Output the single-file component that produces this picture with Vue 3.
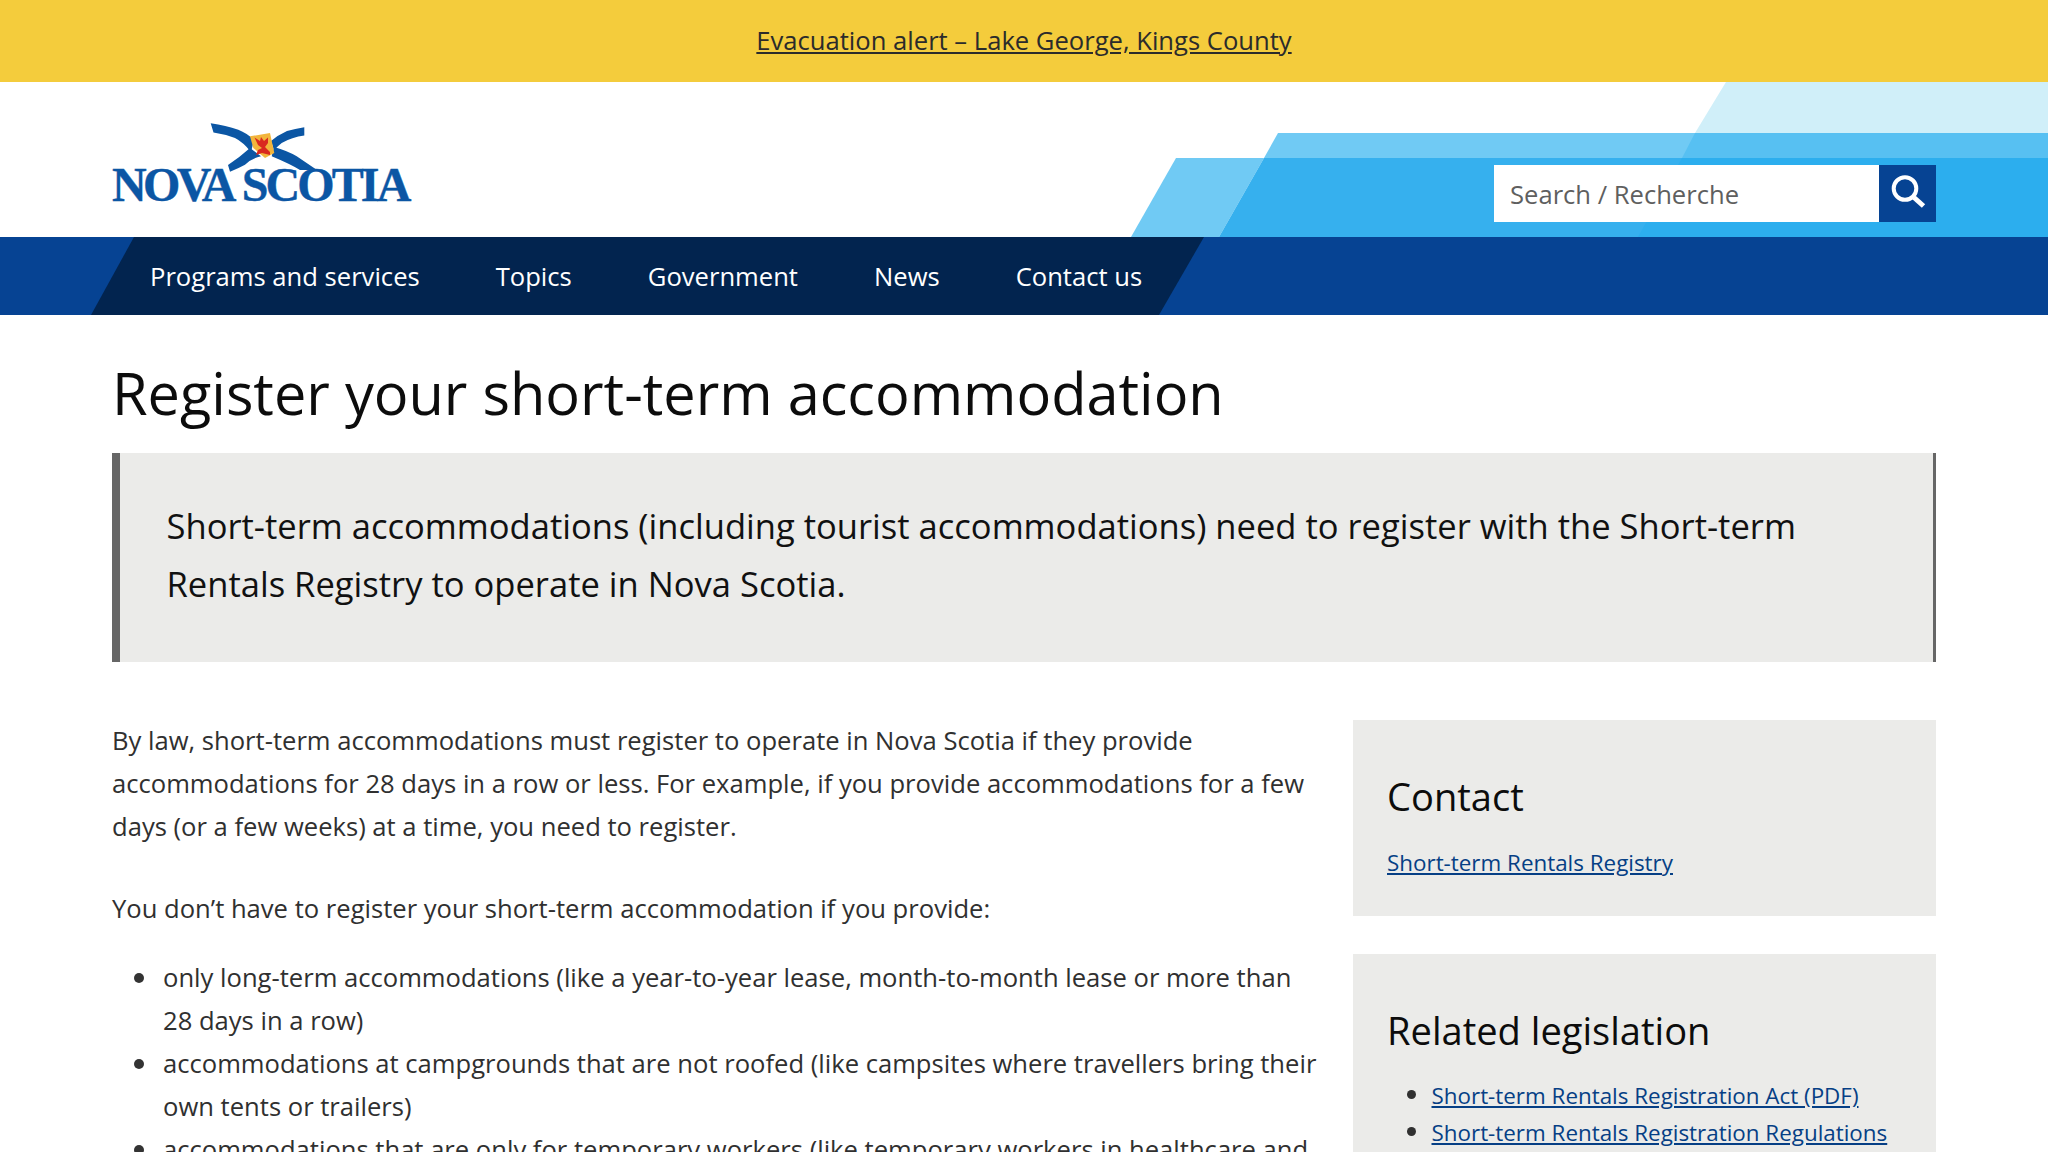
<script setup>
const navItems = ['Programs and services', 'Topics', 'Government', 'News', 'Contact us']
</script>

<template>
  <div class="page">
    <div class="alert"><a href="#">Evacuation alert – Lake George, Kings County</a></div>

    <header class="header">
      <svg class="swoosh" viewBox="0 0 2048 155" width="2048" height="155" aria-hidden="true">
        <polygon fill="#d0eff9" points="1726,0 2048,0 2048,51 1695,51" />
        <polygon fill="#70caf4" points="1278,51 2048,51 2048,76 1264,76" />
        <polygon fill="#57c0f2" points="1695,51 2048,51 2048,76 1682,76" />
        <polygon fill="#70caf4" points="1176,76 1264,76 1219,155 1131,155" />
        <polygon fill="#36b0ee" points="1264,76 2048,76 2048,155 1219,155" />
        <polygon fill="#2caeee" points="1682,76 2048,76 2048,155 1638,155" />
      </svg>
      <div class="logo" role="img" aria-label="Nova Scotia">
        <svg class="saltire" viewBox="110 120 305 85" width="305" height="85" aria-hidden="true">
          <g fill="#0b56a4">
            <path d="M210.7 123.3 Q226 125.5 238.3 129.7 Q247 133 254 140 L251 152 Q243 142 235 138 Q224 134 213.5 132.5 Z" />
            <path d="M274 147 Q288 151 296.7 156.3 L317 170 L300 170 Q290 164 271.7 156.3 Z" />
            <path d="M304.3 127.3 L304.3 135.5 Q292 137 281.7 143 Q278 146 274 150 L271 141 Q278 135 287 131 Q295 129 304.3 127.3 Z" />
            <path d="M250 148 L261 156.3 Q252 158 245 164.7 Q238 168.5 230 171.7 L228 165 Q240 157 250 148 Z" />
          </g>
          <path d="M250 136.3 L270 133 L274.3 153 L265 158 L253.3 148 Z" fill="#f2b53c" />
          <path d="M254.5 137.5 L260 141 L261 137 L264 141 L268 137.5 L268 143 L265 147 L270 152 L270 155 L262 153 L256 155 L258 150 L262 148 L258 145 Z" fill="#d9291f" />
        </svg>
        <span class="nova">NOVA</span><span class="scotia">SCOTIA</span>
      </div>
      <form class="search" @submit.prevent>
        <input class="search-input" type="text" placeholder="Search / Recherche" />
        <button class="search-btn" type="submit" aria-label="Search">
          <svg viewBox="0 0 57 57" width="57" height="57" aria-hidden="true">
            <circle cx="26" cy="23.5" r="11.3" fill="none" stroke="#fff" stroke-width="4" />
            <line x1="35" y1="32.5" x2="44.5" y2="41" stroke="#fff" stroke-width="5" />
          </svg>
        </button>
      </form>
    </header>

    <nav class="nav">
      <div class="nav-dark">
        <a v-for="item in navItems" :key="item" href="#">{{ item }}</a>
      </div>
    </nav>

    <main class="main">
      <h1>Register your short-term accommodation</h1>
      <div class="callout">
        <p>Short-term accommodations (including tourist accommodations) need to register with the Short-term Rentals Registry to operate in Nova Scotia.</p>
      </div>

      <div class="columns">
        <div class="content">
          <p>By law, short-term accommodations must register to operate in Nova Scotia if they provide accommodations for 28 days in a row or less. For example, if you provide accommodations for a few days (or a few weeks) at a time, you need to register.</p>
          <p class="second">You don’t have to register your short-term accommodation if you provide:</p>
          <ul>
            <li>only long-term accommodations (like a year-to-year lease, month-to-month lease or more than 28 days in a row)</li>
            <li>accommodations at campgrounds that are not roofed (like campsites where travellers bring their own tents or trailers)</li>
            <li>accommodations that are only for temporary workers (like temporary workers in healthcare and</li>
          </ul>
        </div>
        <aside class="sidebar">
          <section class="box">
            <h2>Contact</h2>
            <a href="#">Short-term Rentals Registry</a>
          </section>
          <section class="box">
            <h2>Related legislation</h2>
            <ul>
              <li><a href="#">Short-term Rentals Registration Act (PDF)</a></li>
              <li><a href="#">Short-term Rentals Registration Regulations</a></li>
            </ul>
          </section>
        </aside>
      </div>
    </main>
  </div>
</template>

<style>
body { margin: 0; background: #fff; }
</style>

<style scoped>
.page {
  height: 1152px;
  overflow: hidden;
  font-family: "Open Sans", "Noto Sans", sans-serif;
  color: #303030;
}
.alert {
  height: 82px;
  background: #f4cc3c;
  display: flex;
  align-items: center;
  justify-content: center;
  font-size: 25.6px;
  padding-bottom: 2px;
  box-sizing: border-box;
}
.alert a { color: #2b2b2b; }
.header {
  position: relative;
  height: 155px;
  background: #fff;
  display: flex;
  justify-content: space-between;
  padding: 0 112px;
}
.swoosh { position: absolute; left: 0; top: 0; }
.logo {
  position: relative;
  display: flex;
  gap: 9px;
  height: 85px;
  margin-top: 38px;
  padding: 41px 0 0 0;
  box-sizing: border-box;
  font-family: "Liberation Serif", serif;
  font-weight: 700;
  font-size: 48px;
  line-height: 48px;
  color: #0b56a4;
  -webkit-text-stroke: 0.4px #0b56a4;
}
.saltire { position: absolute; left: -2px; top: 0; }
.nova { letter-spacing: -3.6px; }
.scotia { letter-spacing: -2.9px; position: relative; }
.search {
  position: relative;
  display: flex;
  margin: 83px 0 0;
  height: 57px;
}
.search-input {
  width: 385px;
  height: 57px;
  box-sizing: border-box;
  border: 0;
  padding: 2px 16px 0;
  font: 25.6px "Open Sans", sans-serif;
  background: #fff;
  outline: none;
}
.search-input::placeholder { color: #5f5f5f; opacity: 1; }
.search-btn {
  width: 57px;
  height: 57px;
  border: 0;
  padding: 0;
  background: #064393;
  display: flex;
}
.nav {
  height: 78px;
  background: #064393;
}
.nav-dark {
  width: 1113px;
  height: 78px;
  margin-left: 91px;
  background: #02244f;
  clip-path: polygon(43px 0, 100% 0, 1068px 100%, 0 100%);
  display: flex;
  align-items: center;
  gap: 76px;
  padding-left: 59px;
  box-sizing: border-box;
  font-size: 25.6px;
}
.nav-dark a { color: #fff; text-decoration: none; white-space: nowrap; }
.main { padding: 0 112px; }
h1 {
  margin: 0;
  padding-top: 40px;
  font-size: 57.7px;
  font-weight: 400;
  line-height: 76px;
  color: #0c0c0c;
}
.callout {
  margin-top: 22px;
  height: 209px;
  box-sizing: border-box;
  background: #ebebe9;
  border-left: 8px solid #666;
  border-right: 3px solid #666;
  padding: 44px 46px 0 46.5px;
  font-size: 34.56px;
  line-height: 58px;
  color: #111;
}
.callout p { margin: 0; }
.columns {
  display: flex;
  justify-content: space-between;
  margin-top: 58px;
}
.content {
  width: 1210px;
  margin-top: -1px;
  font-size: 25.6px;
  line-height: 43px;
  flex: none;
}
.content p { margin: 0; }
.content .second { margin-top: 39px; }
.content ul { margin: 26px 0 0; padding-left: 51px; list-style: none; }
.content li { position: relative; }
.content li::before {
  content: "";
  position: absolute;
  left: -29px;
  top: 17px;
  width: 10px;
  height: 10px;
  border-radius: 50%;
  background: #333;
}
.sidebar { width: 583px; flex: none; }
.box {
  background: #ebebe9;
  padding: 52px 34px 35px;
  margin-bottom: 38px;
}
.box h2 {
  margin: 0 0 24px;
  font-size: 38.1px;
  line-height: 48px;
  font-weight: 400;
  color: #0c0c0c;
}
.box a {
  font-size: 22.4px;
  line-height: 37px;
  color: #063f85;
}
.box ul { margin: -1px 0 0; padding-left: 44.5px; font-size: 25.6px; line-height: 36.6px; }
.box ul a { line-height: 28px; }
</style>
